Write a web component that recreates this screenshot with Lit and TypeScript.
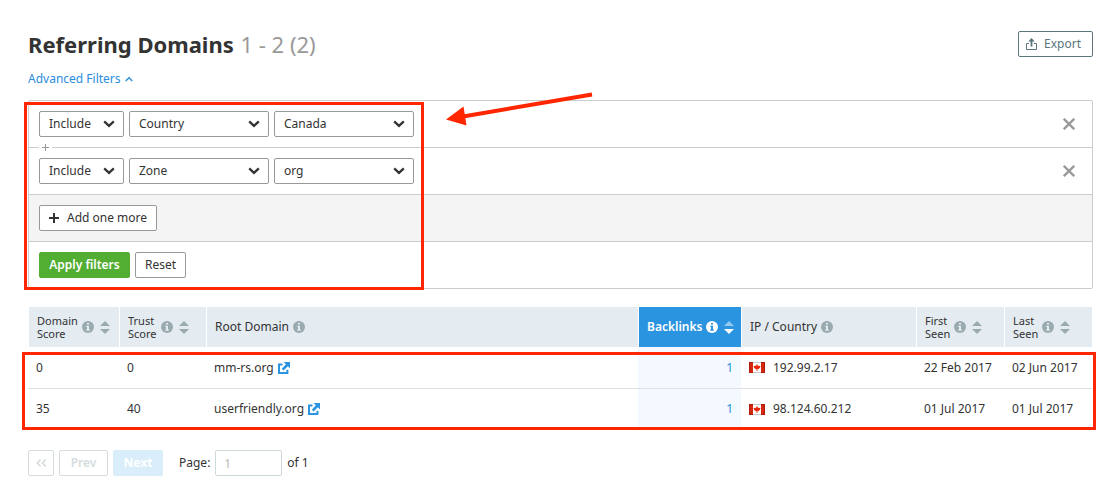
import { LitElement, html, css, nothing } from "lit";
import { customElement, state } from "lit/decorators.js";

const chevronDown = html`<svg class="chevron" width="12" height="8" viewBox="0 0 12 8" aria-hidden="true">
  <path d="M1.2 1.4 L6 5.9 L10.8 1.4" fill="none" stroke="#333" stroke-width="2.3" />
</svg>`;

const infoIcon = html`<svg class="info" width="12" height="12" viewBox="0 0 12 12" aria-hidden="true">
  <circle cx="6" cy="6" r="6" fill="currentColor" />
  <path class="glyph" d="M5 2h2v1.6H5z M4.3 4.7H7v3.8h0.8v1.2H4.3V8.5H5V5.9H4.3z" />
</svg>`;

const sortIcon = html`<svg width="10" height="13" viewBox="0 0 10 13" aria-hidden="true">
  <path class="up" d="M5 0 L10 5 H0z" fill="currentColor" />
  <path d="M0 8 H10 L5 13z" fill="currentColor" />
</svg>`;

const externalIcon = html`<svg width="12" height="12" viewBox="0 0 12 12" aria-hidden="true">
  <path d="M4.5 2.6 H1 V11 H9.4 V7.8" fill="none" stroke="#2b94e1" stroke-width="2" />
  <path d="M5.6 0 H12 V6.4 L9.9 4.3 L5.6 8.5 L3.8 6.7 L7.9 2.3z" fill="#2b94e1" />
</svg>`;

const closeIcon = html`<svg width="12" height="12" viewBox="0 0 12 12" aria-hidden="true">
  <path d="M0.8 0.8 L11.2 11.2 M11.2 0.8 L0.8 11.2" stroke="#999" stroke-width="2.3" />
</svg>`;

const canadaFlag = html`<svg width="16" height="11" viewBox="0 0 16 11" role="img" aria-label="Canada">
  <rect width="16" height="11" fill="#c9c9c9" />
  <rect y="1" width="16" height="9" fill="#fff" />
  <rect width="4" height="11" fill="#d32710" />
  <rect x="12" width="4" height="11" fill="#d32710" />
  <path d="M0 0h4v1H0z M12 0h4v1h-4z M0 10h4v1H0z M12 10h4v1h-4z M0 0h1v11H0z M15 0h1v11h-1z" fill="#b01c0c" />
  <path d="M8 2 L9 3.8 L11.5 4 L10.8 6 L9 7.2 L8.4 7.2 V9 H7.6 V7.2 L7 7.2 L5.2 6 L4.5 4 L7 3.8z" fill="#e8290b" />
</svg>`;

interface Filter {
  field: string;
  value: string;
}

interface Column {
  key: string;
  label: string[];
  sortable: boolean;
}

const columns: Column[] = [
  { key: "domain-score", label: ["Domain", "Score"], sortable: true },
  { key: "trust-score", label: ["Trust", "Score"], sortable: true },
  { key: "root", label: ["Root Domain"], sortable: false },
  { key: "backlinks", label: ["Backlinks"], sortable: true },
  { key: "ip", label: ["IP / Country"], sortable: false },
  { key: "first", label: ["First", "Seen"], sortable: true },
  { key: "last", label: ["Last", "Seen"], sortable: true },
];

const rows = [
  { score: 0, trust: 0, domain: "mm-rs.org", links: 1, ip: "192.99.2.17", first: "22 Feb 2017", last: "02 Jun 2017" },
  { score: 35, trust: 40, domain: "userfriendly.org", links: 1, ip: "98.124.60.212", first: "01 Jul 2017", last: "01 Jul 2017" },
];

@customElement("app-root")
export class AppRoot extends LitElement {
  @state() private filters: Filter[] = [
    { field: "Country", value: "Canada" },
    { field: "Zone", value: "org" },
  ];

  static styles = css`
    :host {
      display: block;
      box-sizing: border-box;
      padding: 31px 20px 16px 28px;
      background: #fff;
      color: #333;
      font: 12px/16px "Noto Sans", sans-serif;
    }
    *, *::before { box-sizing: border-box; }
    svg { display: block; flex: none; }
    button, select, input { font: inherit; color: inherit; margin: 0; }
    button { cursor: pointer; }
    .head { display: flex; justify-content: space-between; align-items: center; height: 26px; }
    h1 { margin: 0; font-size: 22px; line-height: 26px; font-weight: 700; }
    h1 span { margin-left: 1px; font-weight: 400; color: #999; }
    .btn {
      display: inline-flex;
      align-items: center;
      justify-content: center;
      gap: 8px;
      height: 26px;
      padding: 0 9px;
      border: 1px solid #999;
      border-radius: 2px;
      background: #fff;
      white-space: nowrap;
    }
    .export { gap: 7px; padding: 0 11px 0 7px; border-color: #5b767c; color: #5b767c; }
    .toggle {
      display: flex;
      align-items: center;
      gap: 4px;
      margin: 14px 0 13px;
      padding: 0;
      border: 0;
      background: none;
      color: #2b8ddb;
    }
    .filters { position: relative; border: 1px solid #ccc; border-radius: 2px; }
    .line { position: relative; display: flex; align-items: center; gap: 5px; padding: 10px; }
    .line + .line { border-top: 1px solid #ccc; }
    .line.add { background: #f4f4f4; }
    .joint {
      position: absolute;
      top: -4px;
      left: 10px;
      background: #fff;
    }
    .pick { display: grid; align-items: center; width: 140px; }
    .pick.mode { width: 85px; }
    .pick select, .pick svg { grid-area: 1 / 1; }
    .pick svg { justify-self: end; margin-right: 9px; pointer-events: none; }
    .pick select {
      appearance: none;
      width: 100%;
      height: 26px;
      padding: 0 24px 0 9px;
      border: 1px solid #999;
      border-radius: 2px;
      background: #fff;
    }
    .remove { margin-left: auto; padding: 0 7px; border: 0; background: none; }
    .apply { min-width: 91px; border-color: #52ae33; background: #52ae33; color: #fff; font-weight: 600; }
    .frame { position: absolute; border: 3px solid #ff2600; pointer-events: none; }
    .frame.around-filters { left: -5px; top: 1px; bottom: -2px; width: 400px; }
    .frame.around-rows { left: -6px; right: -4px; top: 45px; bottom: -1px; }
    .arrow { position: absolute; left: 416px; top: -11px; pointer-events: none; }

    .results { position: relative; margin: 18px 1px 0 0; }
    table { width: 100%; table-layout: fixed; border-collapse: separate; border-spacing: 0; }
    th, td { padding: 0 0 0 8px; text-align: left; font-weight: 400; white-space: nowrap; }
    th { height: 40px; border-left: 1px solid #fff; background: #e4ebf1; }
    td { height: 41px; }
    tbody tr + tr td { border-top: 1px solid #e0e0e0; }
    .domain-score { width: 91px; }
    .trust-score { width: 87px; }
    .backlinks { width: 103px; }
    .ip { width: 175px; }
    .first { width: 88px; }
    .last { width: 88px; }
    .cell { display: flex; align-items: center; gap: 4px; }
    .two { font-size: 11px; line-height: 13px; }
    .cell button { margin-left: 2px; padding: 0; border: 0; background: none; color: #9aabb0; }
    .info { color: #9aabb0; }
    .glyph { fill: #e4ebf1; }
    th.backlinks { background: #2b94e1; color: #fff; font-weight: 600; }
    th.backlinks .info, th.backlinks button { color: #fff; }
    th.backlinks .glyph { fill: #2b94e1; }
    th.backlinks .up { opacity: 0.5; }
    td.backlinks { padding-right: 8px; background: #f3f9fe; text-align: right; }
    td a { color: #2b8ddb; text-decoration: none; }
    .root a { display: flex; align-items: center; gap: 4px; color: #333; }
    td.ip .cell { gap: 8px; }

    .pager { display: flex; align-items: center; gap: 5px; margin-top: 21px; }
    .pager .btn { border-color: #d5dcde; color: #d5dcde; min-width: 49px; font-weight: 600; }
    .pager .start { min-width: 26px; padding: 0; }
    .pager .next { min-width: 50px; border-color: #d9edfb; background: #d9edfb; color: #fff; font-weight: 700; }
    .pager label { margin-left: 11px; }
    .pager input {
      width: 67px;
      height: 26px;
      padding: 0 8px;
      border: 1px solid #cfd8da;
      border-radius: 2px;
      background: #fff;
      color: #bbb;
    }
  `;

  private addFilter() {
    this.filters = [...this.filters, { field: "Country", value: "Canada" }];
  }

  private removeFilter(index: number) {
    this.filters = this.filters.filter((_, i) => i !== index);
  }

  private renderFilter(filter: Filter, index: number) {
    return html`<div class="line">
      ${index > 0
        ? html`<svg class="joint" width="13" height="7" viewBox="0 0 13 7" aria-hidden="true">
            <path d="M6.5 0 V7 M3 3.5 H10" stroke="#999" />
          </svg>`
        : nothing}
      <span class="pick mode">
        <select aria-label="Filter mode"><option>Include</option><option>Exclude</option></select>${chevronDown}
      </span>
      <span class="pick">
        <select aria-label="Filter field"><option>${filter.field}</option></select>${chevronDown}
      </span>
      <span class="pick">
        <select aria-label="Filter value"><option>${filter.value}</option></select>${chevronDown}
      </span>
      <button class="remove" aria-label="Remove filter" @click=${() => this.removeFilter(index)}>${closeIcon}</button>
    </div>`;
  }

  private renderHeader(column: Column) {
    return html`<th class=${column.key} scope="col">
      <div class="cell">
        <span class=${column.label.length > 1 ? "two" : "one"}>${column.label.map((part, i) => (i ? html`<br />${part}` : part))}</span>
        ${infoIcon}
        ${column.sortable ? html`<button aria-label="Sort by ${column.label.join(" ")}">${sortIcon}</button>` : nothing}
      </div>
    </th>`;
  }

  render() {
    return html`
      <header class="head">
        <h1>Referring Domains <span>1 - 2 (2)</span></h1>
        <button class="btn export">
          <svg width="11" height="12" viewBox="0 0 11 12" aria-hidden="true">
            <path d="M3 5.5 H0.5 V11.5 H10.5 V5.5 H8" fill="none" stroke="currentColor" />
            <path d="M5.5 0 L8.7 3.4 H6.4 V8.5 H4.6 V3.4 H2.3z" fill="currentColor" />
          </svg>
          Export
        </button>
      </header>
      <button class="toggle" aria-expanded="true">
        Advanced Filters
        <svg width="8" height="6" viewBox="0 0 8 6" aria-hidden="true">
          <path d="M0.7 5 L4 1.7 L7.3 5" fill="none" stroke="currentColor" stroke-width="1.4" />
        </svg>
      </button>

      <section class="filters">
        ${this.filters.map((filter, i) => this.renderFilter(filter, i))}
        <div class="line add">
          <button class="btn" @click=${this.addFilter}>
            <svg width="10" height="10" viewBox="0 0 10 10" aria-hidden="true">
              <path d="M5 0 V10 M0 5 H10" stroke="#333" stroke-width="2" />
            </svg>
            Add one more
          </button>
        </div>
        <div class="line">
          <button class="btn apply">Apply filters</button>
          <button class="btn">Reset</button>
        </div>
        <div class="frame around-filters"></div>
        <svg class="arrow" width="150" height="38" viewBox="0 0 150 38" aria-hidden="true">
          <path d="M147 4.5 L18 26.5" stroke="#ff2600" stroke-width="4" />
          <path d="M1 29.5 L18.5 16.5 L21.5 35.5z" fill="#ff2600" />
        </svg>
      </section>

      <section class="results">
        <table>
          <thead>
            <tr>${columns.map((column) => this.renderHeader(column))}</tr>
          </thead>
          <tbody>
            ${rows.map(
              (row) => html`<tr>
                <td>${row.score}</td>
                <td>${row.trust}</td>
                <td class="root"><a href="#${row.domain}">${row.domain} ${externalIcon}</a></td>
                <td class="backlinks"><a href="#backlinks">${row.links}</a></td>
                <td class="ip"><div class="cell">${canadaFlag}${row.ip}</div></td>
                <td>${row.first}</td>
                <td>${row.last}</td>
              </tr>`
            )}
          </tbody>
        </table>
        <div class="frame around-rows"></div>
      </section>

      <nav class="pager" aria-label="Pages">
        <button class="btn start" aria-label="First page" disabled>
          <svg width="11" height="8" viewBox="0 0 11 8" aria-hidden="true">
            <path d="M4.6 0.6 L1.2 4 L4.6 7.4 M9.8 0.6 L6.4 4 L9.8 7.4" fill="none" stroke="currentColor" stroke-width="1.6" />
          </svg>
        </button>
        <button class="btn" disabled>Prev</button>
        <button class="btn next" disabled>Next</button>
        <label for="page">Page:</label>
        <input id="page" type="text" value="1" />
        <span>of 1</span>
      </nav>
    `;
  }
}
